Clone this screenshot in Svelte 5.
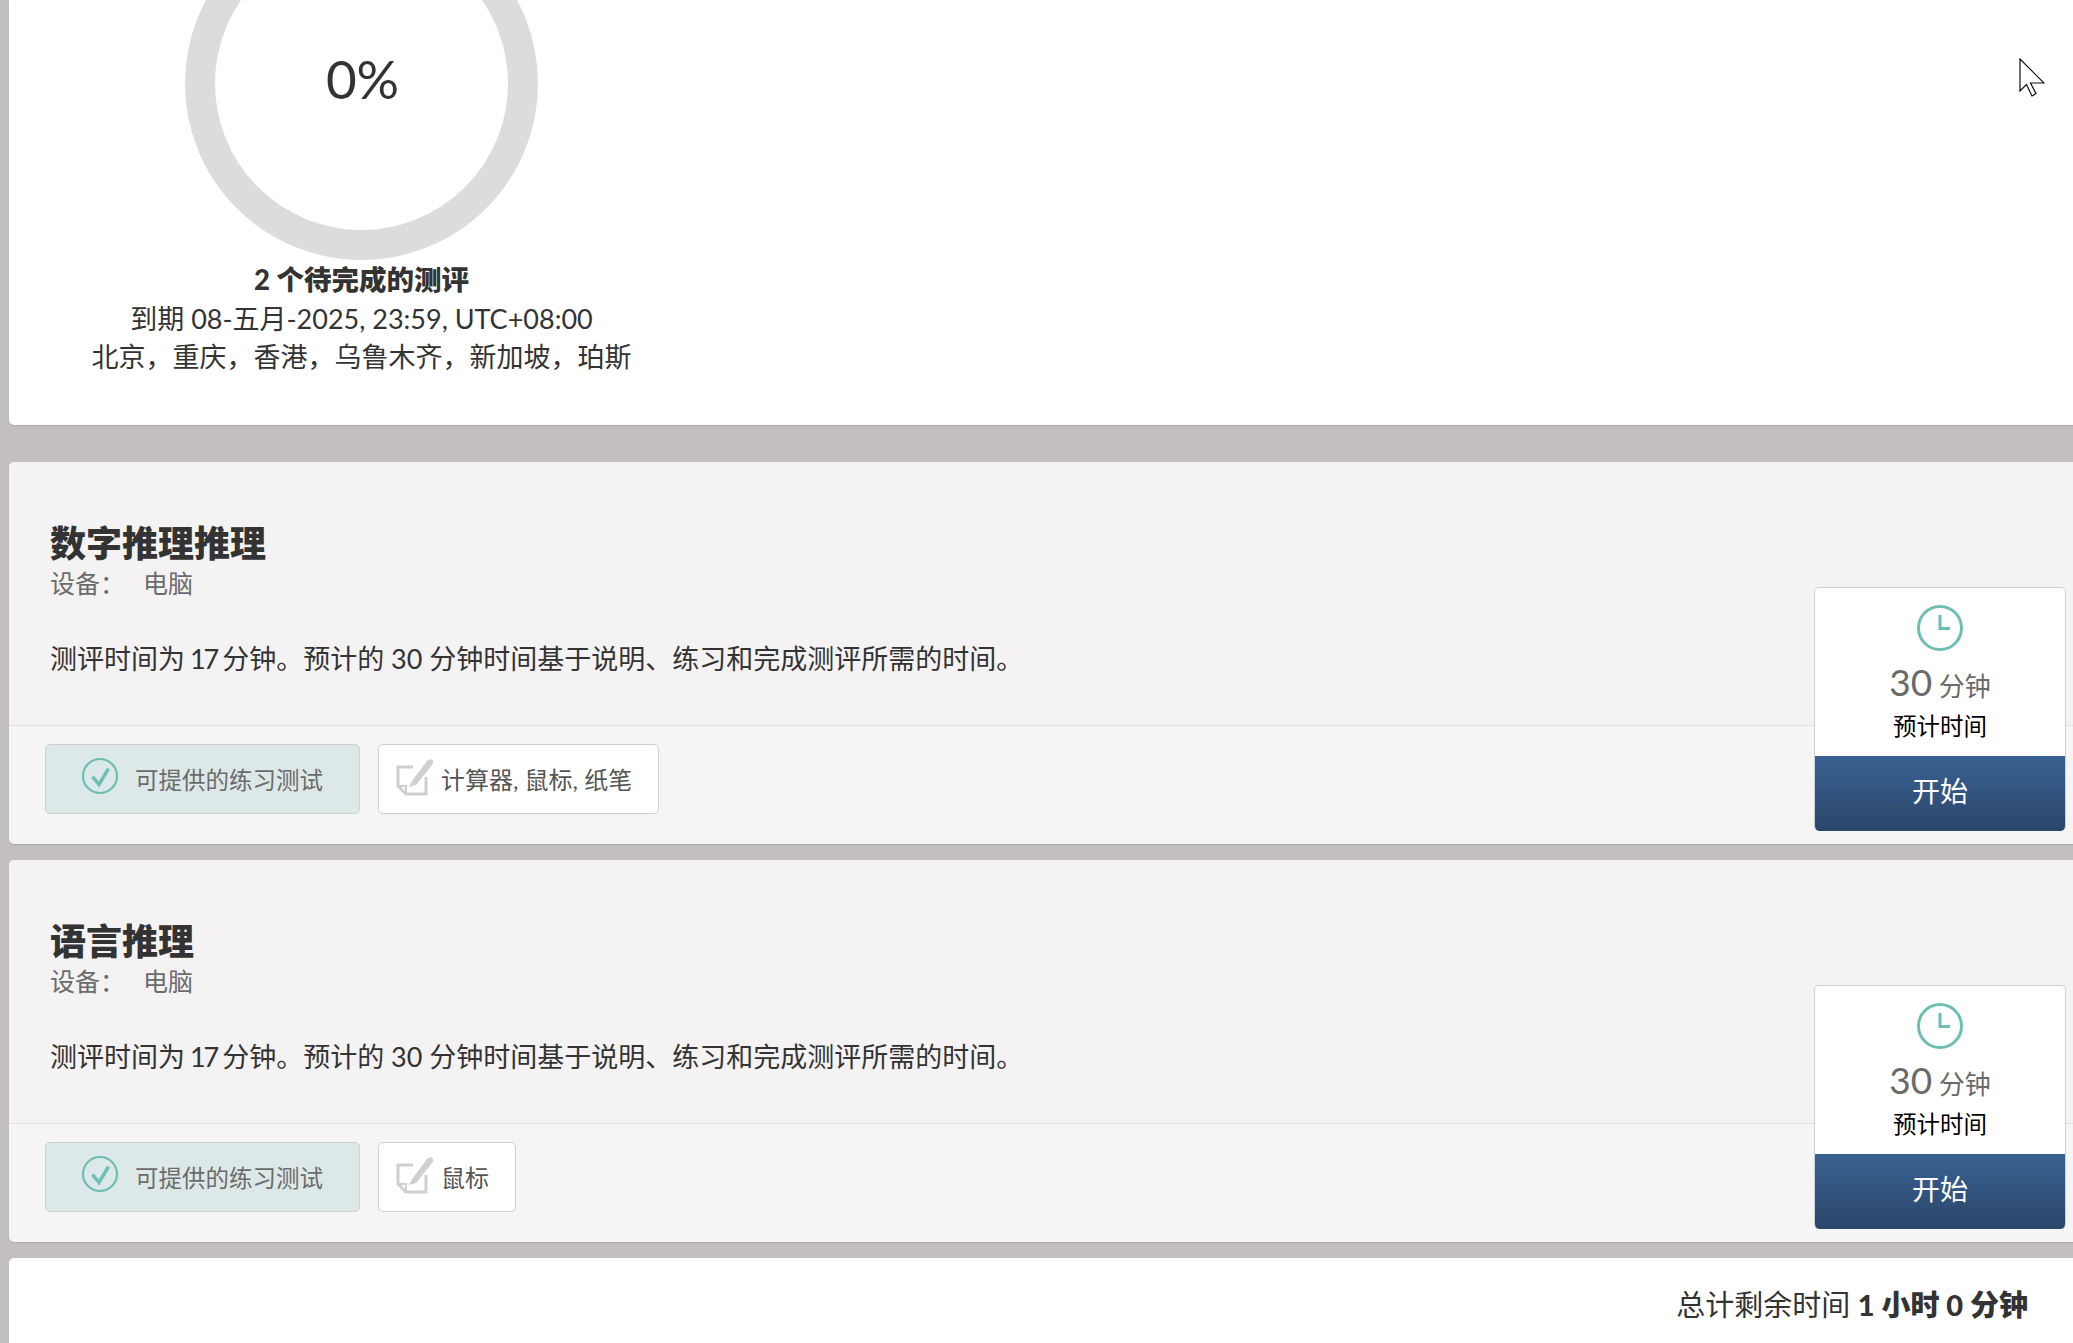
<script>
  const tests = [
    { name: "数字推理推理", tools: "计算器, 鼠标, 纸笔" },
    { name: "语言推理", tools: "鼠标" }
  ];
</script>

<div class="page">
  <section class="card summary">
    <div class="ring"><span class="pct">0%</span></div>
    <p class="pending">2 个待完成的测评</p>
    <p class="line">到期 08-五月-2025, 23:59, UTC+08:00</p>
    <p class="line">北京，重庆，香港，乌鲁木齐，新加坡，珀斯</p>
    <svg class="cursor" width="26" height="40" viewBox="0 0 26 40">
      <path d="M1 1 L25 25 L11.500 25 L17 35.500 L13 38 L7.500 26.500 L1 33 Z" fill="#fff" stroke="#111" stroke-width="1.200" stroke-linejoin="miter" />
    </svg>
  </section>

  {#each tests as t}
    <section class="card test">
      <div class="head">
        <h2>{t.name}</h2>
        <div class="device"><span>设备：</span><span>电脑</span></div>
        <p class="desc">测评时间为<span class="tight">{" 17 "}</span>分钟。预计的 30 分钟时间基于说明、练习和完成测评所需的时间。</p>
      </div>
      <div class="foot">
        <div class="badge practice">
          <svg width="38" height="38" viewBox="0 0 38 38">
            <circle cx="19" cy="19" r="17" fill="none" stroke="#6cbfb2" stroke-width="2.200" />
            <path d="M11.500 19.700 L18 27.500 L27.500 11.700" fill="none" stroke="#6cbfb2" stroke-width="3.500" />
          </svg>
          <span>可提供的练习测试</span>
        </div>
        <div class="badge tools">
          <svg width="38" height="38" viewBox="0 0 38 38">
            <path d="M17 9 H2 V28 L10 36 H30 V19" fill="none" stroke="#cfcfcf" stroke-width="3" />
            <path d="M3 28 H10 V35" fill="none" stroke="#cfcfcf" stroke-width="2" />
            <path d="M16 23 L31 3 Q34 0 36.500 2 Q38 4.500 36 7 L20 27 L13 29 Z" fill="#cfcfcf" />
          </svg>
          <span>{t.tools}</span>
        </div>
      </div>
      <aside class="time">
        <div class="time-info">
          <svg width="46" height="46" viewBox="0 0 46 46">
            <circle cx="23" cy="23" r="21.500" fill="none" stroke="#6cbfb2" stroke-width="3" />
            <path d="M23 10 V23.500 H33" fill="none" stroke="#6cbfb2" stroke-width="3" />
          </svg>
          <div class="mins"><span class="num">30</span> 分钟</div>
          <div class="est">预计时间</div>
        </div>
        <button class="start">开始</button>
      </aside>
    </section>
  {/each}

  <section class="card total">
    <span>总计剩余时间 <b>1 小时 0 分钟</b></span>
  </section>
</div>

<style>
  :global(body) {
    margin: 0;
    background: #c2bfbe;
    overflow: hidden;
  }
  .page {
    height: 1343px;
    overflow: hidden;
    padding-left: 9px;
    font-family: Lato, "Noto Sans CJK SC", sans-serif;
    color: #333;
  }
  .card {
    position: relative;
    width: 2075px;
    border-radius: 5px;
    box-shadow: 0 1px 1px rgba(0, 0, 0, 0.12);
  }
  .summary {
    height: 425px;
    margin-bottom: 37px;
    background: #fff;
    border-radius: 0 0 5px 5px;
  }
  .ring {
    position: absolute;
    left: 176px;
    top: -93px;
    width: 293px;
    height: 293px;
    border: 30px solid #dcdcdc;
    border-radius: 50%;
    display: flex;
    align-items: center;
    justify-content: center;
  }
  .pct {
    padding: 0 0 11px 2px;
    font-size: 53px;
    font-weight: 400;
    color: #333;
  }
  .pending,
  .line {
    width: 705px;
    margin: 0;
    text-align: center;
    font-size: 27px;
    line-height: 38.500px;
  }
  .pending {
    padding-top: 261px;
    font-size: 27.500px;
    font-weight: 900;
  }
  .cursor {
    position: absolute;
    right: 39px;
    top: 58px;
  }
  .test {
    height: 382px;
    margin-bottom: 16px;
    background: #f5f5f5;
  }
  .head {
    height: 264px;
    box-sizing: border-box;
    padding: 58px 0 0 41px;
    background: #f4f2f3;
    border-bottom: 1px solid #e3e3e3;
    border-radius: 5px 5px 0 0;
  }
  h2 {
    margin: 0;
    font-size: 36px;
    line-height: 46px;
    font-weight: 900;
    color: #333;
  }
  .device {
    display: flex;
    gap: 18px;
    font-size: 25px;
    line-height: 34px;
    color: #6b6b6b;
  }
  .desc {
    margin: 40px 0 0;
    font-size: 27px;
    line-height: 38px;
    color: #333;
  }
  .tight {
    letter-spacing: -2px;
    white-space: pre;
  }
  .foot {
    display: flex;
    gap: 18px;
    padding: 18px 0 0 36px;
  }
  .badge {
    height: 70px;
    box-sizing: border-box;
    display: flex;
    align-items: center;
    border: 1px solid #cfcfcf;
    border-radius: 5px;
    font-size: 24px;
  }
  .practice {
    width: 315px;
    gap: 16px;
    padding-left: 35px;
    background: #dce9e8;
    font-size: 23.500px;
    color: #6b6b6b;
  }
  .practice svg {
    margin-top: -6px;
  }
  .tools {
    gap: 7px;
    padding: 0 26px 0 17px;
    background: #fff;
    color: #555;
  }
  .tools svg {
    margin-top: -5px;
  }
  .tools span {
    padding-bottom: 2px;
  }
  .time {
    position: absolute;
    top: 125px;
    right: 18px;
    width: 252px;
    height: 244px;
    box-sizing: border-box;
    display: flex;
    flex-direction: column;
    background: #fff;
    border: 1px solid #cfcfcf;
    border-bottom: 0;
    border-radius: 5px;
    overflow: hidden;
  }
  .time-info {
    flex: 1;
    display: flex;
    flex-direction: column;
    align-items: center;
    padding-top: 17px;
  }
  .mins {
    margin-top: 8px;
    font-size: 26px;
    line-height: 46px;
    color: #6a6a6a;
  }
  .num {
    font-size: 37px;
  }
  .est {
    font-size: 23.500px;
    line-height: 34px;
    color: #000;
  }
  .start {
    height: 75px;
    border: 0;
    padding: 0 0 8px;
    background: linear-gradient(#3a6292, #2a466b);
    color: #fff;
    font-family: inherit;
    font-size: 28px;
  }
  .total {
    height: 90px;
    box-sizing: border-box;
    background: #fff;
    display: flex;
    justify-content: flex-end;
    padding: 27px 56px 0 0;
    font-size: 29px;
    line-height: 40px;
    color: #333;
  }
  .total b {
    font-weight: 900;
  }
</style>
